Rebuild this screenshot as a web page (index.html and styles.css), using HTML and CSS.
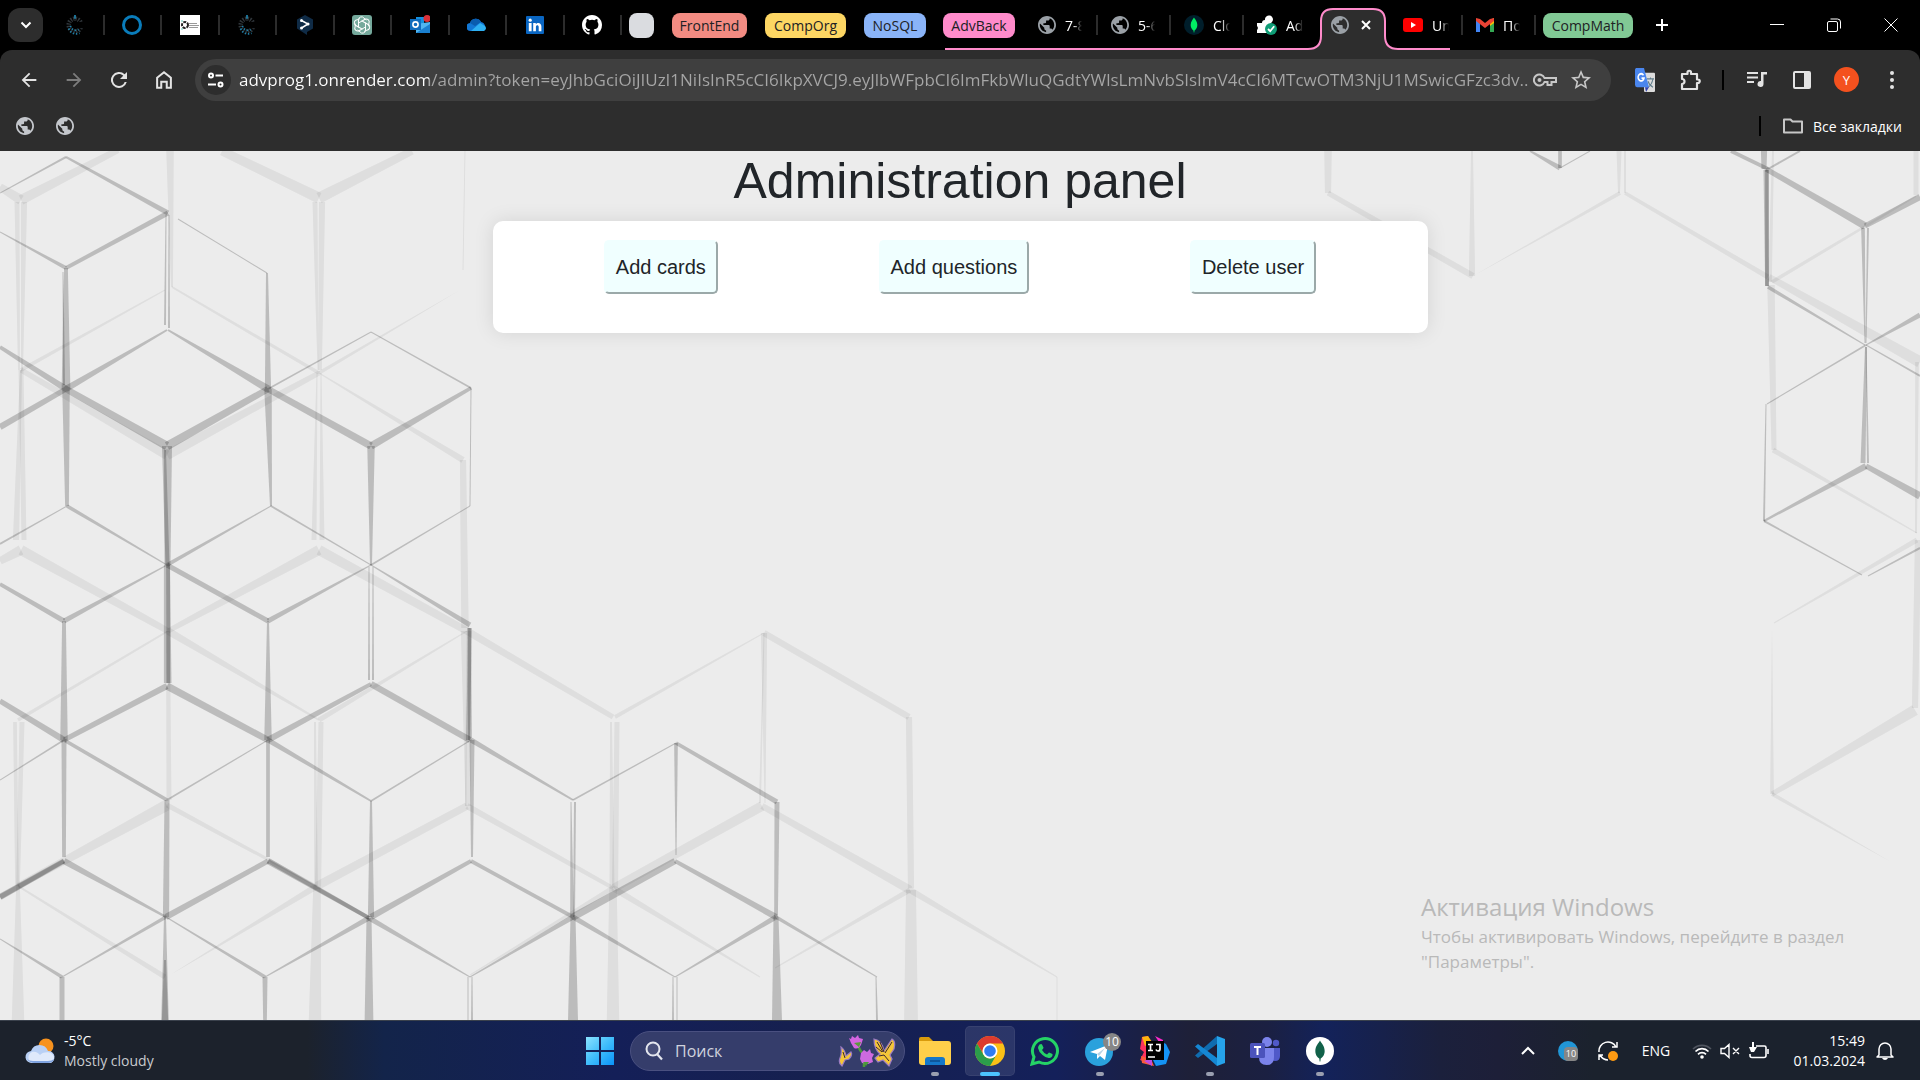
FILE: index.html
```
<!DOCTYPE html>
<html lang="ru">
<head>
<meta charset="utf-8">
<title>Administration panel</title>
<link rel="stylesheet" href="styles.css">
</head>
<body>
<svg class="sprite" aria-hidden="true">
  <symbol id="globe" viewBox="2 2 20 20"><path d="M12 2C6.48 2 2 6.48 2 12s4.480 10 10 10 10-4.480 10-10S17.520 2 12 2zm-1 17.930c-3.950-.49-7-3.850-7-7.930 0-.62.080-1.210.21-1.790L9 15v1c0 1.100.9 2 2 2v1.930zm6.900-2.540c-.26-.81-1-1.390-1.900-1.390h-1v-3c0-.55-.45-1-1-1H8v-2h2c.55 0 1-.45 1-1V7h2c1.100 0 2-.9 2-2v-.41c2.930 1.190 5 4.060 5 7.410 0 2.080-.8 3.970-2.100 5.390z"/></symbol>
  <symbol id="radial-c" viewBox="0 0 20 24"><g fill="none"><circle cx="10" cy="12" r="7" stroke="#30363b" stroke-width="5" stroke-dasharray="1.6 1.4" pathLength="48" /><path d="M3 16a8.500 8.500 0 0 0 12 5M5 13a6 6 0 0 0 9 4" stroke="#1c7fa8" stroke-width="2" stroke-dasharray="1.500 2"/><path d="M10 1v4" stroke="#2aa5d8" stroke-width="1.500"/><path d="M13 12h7" stroke="#000" stroke-width="7"/></g></symbol>
  <symbol id="mongo" viewBox="0 0 24 24"><path d="M12 3c1 2 4 4.500 4 9 0 3.500-2 5.500-3.400 6.500L12.300 21h-.6l-.3-2.500C10 17.500 8 15.500 8 12c0-4.500 3-7 4-9z"/></symbol>
</svg>

<header class="browser">
  <div class="tabstrip">
    <button class="tab-search" aria-label="Search tabs"><svg viewBox="0 0 12 12" width="12" height="12"><path d="M1.500 3.500 6 8l4.500-4.500" fill="none" stroke="#fff" stroke-width="2"/></svg></button>
    <nav class="pinned" aria-label="Pinned tabs">
      <a href="#"><svg width="18" height="22"><use href="#radial-c"/></svg></a>
      <a href="#"><svg width="20" height="20" viewBox="0 0 20 20"><circle cx="10" cy="10" r="8.500" fill="none" stroke="#0a7cba" stroke-width="3"/></svg></a>
      <a href="#"><svg width="20" height="20" viewBox="0 0 20 20"><path fill="#fff" d="M0 0h20v20H0z"/><circle cx="5" cy="10" r="3" fill="none" stroke="#222" stroke-width="2" stroke-dasharray="3 1"/><path d="M1 6h2M1 14h2" stroke="#6cb"/><path d="M9 8.500h8M9 10.500h10M9 12.500h9" stroke="#999"/></svg></a>
      <a href="#"><svg width="18" height="22"><use href="#radial-c"/></svg></a>
      <a href="#"><svg width="18" height="20" viewBox="0 0 18 20"><path d="M9 0l8 4.500v9L11 17v3l-3-2-7-4.500v-9z" fill="#0f2b46"/><path d="M5.500 5.500 12 9l-6.500 4" fill="none" stroke="#fff" stroke-width="1.500"/><circle cx="5.500" cy="5.500" r="1.500" fill="#fff"/><circle cx="12" cy="9" r="1.500" fill="#fff"/><circle cx="5.500" cy="13" r="1.500" fill="#fff"/></svg></a>
      <a href="#"><svg width="20" height="20" viewBox="0 0 20 20"><rect width="20" height="20" rx="3" fill="#75a99c"/><g fill="none" stroke="#fff"><path id="petal" d="M10 6 6.500 8V4.500A3 3 0 0 1 12 3.200L14.500 5"/><use href="#petal" transform="rotate(60 10 10)"/><use href="#petal" transform="rotate(120 10 10)"/><use href="#petal" transform="rotate(180 10 10)"/><use href="#petal" transform="rotate(240 10 10)"/><use href="#petal" transform="rotate(300 10 10)"/></g></svg></a>
      <a href="#"><svg width="20" height="20" viewBox="0 0 20 20"><path d="M6 2h8v8H6z" fill="#1490df"/><path d="M6 9l14-2v11H6z" fill="#50b5f0"/><path d="M6 18 20 9v9z" fill="#1a80d0"/><rect y="4" width="11" height="11" fill="#0f6cbd"/><circle cx="5.500" cy="9.500" r="2.600" fill="none" stroke="#fff" stroke-width="1.600"/><circle cx="17" cy="3.500" r="3.500" fill="#d93038"/></svg></a>
      <a href="#"><svg width="20" height="14" viewBox="0 0 20 14"><path d="M4 13a4 4 0 0 1-1-8 6 6 0 0 1 11-1 5 5 0 0 1 2 9z" fill="#1277d4"/><path d="M4 13l9-8 5 3a3 3 0 0 1-1 5z" fill="#2eb0f2"/><path d="M3 5a6 6 0 0 1 11-1l-6 4z" fill="#0a5cae"/></svg></a>
      <a href="#"><svg width="18" height="18" viewBox="0 0 18 18"><rect width="18" height="18" rx="1" fill="#0a66c2"/><g fill="#fff"><circle cx="4.200" cy="4.200" r="1.600"/><path d="M2.800 7h2.800v8.300H2.800zM7.200 7h2.600v1.200C11.500 6 15.400 6.500 15.400 10.500v4.800h-2.700v-4.300c0-2.500-2.800-2.300-2.800 0v4.300H7.200z"/></g></svg></a>
      <a href="#"><svg width="20" height="20" viewBox="0 0 16 16"><path fill="#fff" d="M8 0C3.580 0 0 3.580 0 8c0 3.540 2.290 6.530 5.470 7.590.4.070.55-.17.55-.38 0-.19-.01-.82-.01-1.490-2.010.37-2.530-.49-2.690-.94-.09-.23-.48-.94-.82-1.130-.28-.15-.68-.52-.01-.53.63-.01 1.080.58 1.230.82.72 1.210 1.870.87 2.330.66.07-.52.28-.87.51-1.070-1.780-.2-3.640-.89-3.640-3.950 0-.87.31-1.590.82-2.150-.08-.2-.36-1.020.08-2.120 0 0 .67-.21 2.200.82a7.600 7.600 0 0 1 4 0c1.530-1.040 2.200-.82 2.200-.82.44 1.100.16 1.920.08 2.120.51.56.82 1.270.82 2.150 0 3.070-1.870 3.750-3.650 3.950.29.25.54.73.54 1.480 0 1.070-.01 1.930-.01 2.200 0 .21.15.46.55.38A8 8 0 0 0 16 8c0-4.420-3.580-8-8-8z"/></svg></a>
    </nav>
    <div class="groups">
      <button class="chip chip-blank" aria-label="Group"></button>
      <button class="chip chip-red">FrontEnd</button>
      <button class="chip chip-yellow">CompOrg</button>
      <button class="chip chip-blue">NoSQL</button>
    </div>
    <div class="active-group">
      <svg class="group-line" width="508" height="50" viewBox="944 0 508 50"><path d="M1309 50Q1322 49 1322 36V21Q1322 9 1334 9h40Q1386 9 1386 21V36Q1386 49 1399 50z" fill="#2d2d2d"/><path d="M946 49h363Q1322 49 1322 36V21Q1322 9 1334 9h40Q1386 9 1386 21V36Q1386 49 1399 49h52" fill="none" stroke="#ff8bcb" stroke-width="2"/></svg>
      <button class="chip chip-pink">AdvBack</button>
      <nav class="tabs" aria-label="Tabs">
        <a href="#" class="sep"><svg class="globe" width="18" height="18"><use href="#globe"/></svg><span>7-8</span></a>
        <a href="#" class="sep"><svg class="globe" width="18" height="18"><use href="#globe"/></svg><span>5-6</span></a>
        <a href="#" class="sep"><svg width="20" height="20" viewBox="0 0 24 24"><circle cx="12" cy="12" r="12" fill="#001e2b"/><use href="#mongo" fill="#00ed64"/></svg><span>Clo</span></a>
        <a href="#"><svg width="20" height="20" viewBox="0 0 20 20"><path d="M0 8h5a3 3 0 0 1 3-3 4 4 0 1 1 7 2l-5 5v6H0v-3a3 3 0 0 0 0-4z" fill="#fff"/><circle cx="14" cy="14" r="6" fill="#0f9d76"/><path d="M11 14l2.200 2.200 4-5" fill="none" stroke="#fff" stroke-width="1.800"/></svg><span>Ad</span></a>
        <a href="#" class="active" aria-label="Administration panel"><svg class="globe" width="18" height="18"><use href="#globe"/></svg><svg width="10" height="10" viewBox="0 0 10 10"><path d="M1 1l8 8M9 1 1 9" stroke="#fff" stroke-width="2"/></svg></a>
        <a href="#" class="sep"><svg width="20" height="20" viewBox="0 0 20 20"><rect y="3" width="20" height="14" rx="3" fill="#f00"/><path d="M8 7l5 3-5 3z" fill="#fff"/></svg><span>Un</span></a>
        <a href="#" class="sep"><svg width="18" height="18" viewBox="0 0 18 18"><path d="M0 4h4v12H0z" fill="#4285f4"/><path d="M14 4h4v12h-4z" fill="#34a853"/><path d="M14 4l4-2v5l-4 3z" fill="#fbbc04"/><path d="M0 2l4 1 5 4 5-4 4-1v3l-9 7-9-7z" fill="#ea4335"/></svg><span>По</span></a>
      </nav>
    </div>
    <button class="chip chip-green">CompMath</button>
    <button class="new-tab" aria-label="New tab"><svg width="14" height="14" viewBox="0 0 14 14"><path d="M7 1v12M1 7h12" stroke="#fff" stroke-width="2"/></svg></button>
    <div class="window-controls">
      <button aria-label="Minimize"><svg width="14" height="14" viewBox="0 0 14 14"><path d="M0 6.500h14" stroke="#fff"/></svg></button>
      <button aria-label="Restore"><svg width="14" height="14" viewBox="0 0 14 14"><path d="M.5 5a1.500 1.500 0 0 1 1.500-1.500h7A1.500 1.500 0 0 1 10.500 5v7A1.500 1.500 0 0 1 9 13.500H2A1.500 1.500 0 0 1 .5 12zM3.500 1h7a3 3 0 0 1 3 3v6.500" fill="none" stroke="#fff"/></svg></button>
      <button aria-label="Close"><svg width="14" height="14" viewBox="0 0 14 14"><path d="M.5.500l13 13M13.500.500l-13 13" stroke="#fff"/></svg></button>
    </div>
  </div>

  <div class="toolbar">
    <div class="nav-buttons">
      <button aria-label="Back"><svg width="22" height="22" viewBox="0 0 24 24"><path fill="#e3e3e3" d="M20 11H7.830l5.590-5.590L12 4l-8 8 8 8 1.410-1.410L7.830 13H20z"/></svg></button>
      <button aria-label="Forward"><svg width="22" height="22" viewBox="0 0 24 24"><path fill="#7c7c7c" d="M12 4l-1.410 1.410L16.170 11H4v2h12.170l-5.580 5.590L12 20l8-8z"/></svg></button>
      <button aria-label="Reload"><svg width="24" height="24" viewBox="0 0 24 24"><path fill="#e3e3e3" d="M17.650 6.350A8 8 0 1 0 19.730 14h-2.080A6 6 0 1 1 12 6c1.660 0 3.140.69 4.220 1.780L13 11h7V4z"/></svg></button>
      <button aria-label="Home"><svg width="22" height="22" viewBox="0 0 24 24"><path d="M4.500 9.500 12 3.500l7.500 6V20.500H15V14H9v6.500H4.500z" fill="none" stroke="#e3e3e3" stroke-width="2.200"/></svg></button>
    </div>
    <div class="omnibox">
      <button class="site-info" aria-label="Site information"><svg width="18" height="18" viewBox="0 0 18 18"><g fill="none" stroke="#fff" stroke-width="2"><circle cx="4" cy="4.500" r="2"/><path d="M8.500 4.500H16M1 13.500h8"/><circle cx="13.500" cy="13.500" r="2"/></g></svg></button>
      <input class="url" type="text" aria-label="Address" value="advprog1.onrender.com/admin?token=eyJhbGciOiJIUzI1NiIsInR5cCI6IkpXVCJ9.eyJlbWFpbCI6ImFkbWluQGdtYWlsLmNvbSIsImV4cCI6MTcwOTM3NjU1MSwicGFzc3dv...">
      <button class="key" aria-label="Passwords"><svg width="24" height="14" viewBox="0 0 24 14"><g fill="none" stroke="#c7c7c7" stroke-width="2"><path d="M11.500 5A5.500 5.500 0 1 0 11.500 9h3v3h4V9H23V5z"/></g><circle cx="6.500" cy="7" r="2" fill="#c7c7c7"/></svg></button>
      <button aria-label="Bookmark this page"><svg width="24" height="24" viewBox="0 0 24 24"><path fill="#c7c7c7" d="M22 9.240l-7.190-.62L12 2 9.190 8.630 2 9.240l5.460 4.730L5.820 21 12 17.270 18.180 21l-1.630-7.030zM12 15.400l-3.760 2.270 1-4.280-3.320-2.880 4.380-.38L12 6.100l1.710 4.040 4.380.38-3.320 2.880 1 4.280z"/></svg></button>
    </div>
    <div class="extensions">
      <button aria-label="Translate"><svg width="20" height="24" viewBox="0 0 20 20" preserveAspectRatio="none"><rect x="9" y="4" width="11" height="16" rx="1" fill="#dcdcdc"/><path d="M12 9h7M15.500 8v1M18 9c-1 4-3 6-5 7M13 11c1 3 3 4 5 5" stroke="#607d8b" fill="none"/><path d="M1 0h8l5 16H2a2 2 0 0 1-2-2V1z" fill="#4a86ee"/><path d="M10 16h4l-3 4z" fill="#3344b0"/><path d="M8.500 6A3 3 0 1 0 9 8.500H6.500" stroke="#fff" stroke-width="1.500" fill="none"/></svg></button>
      <button aria-label="Extensions"><svg width="24" height="24" viewBox="0 0 24 24"><path d="M4 6h5.500V4.500a1.700 1.700 0 0 1 3.500 0V6h6v5.500h1a1.700 1.700 0 0 1 0 3.500h-1V21H4v-5a2.500 2.500 0 0 0 0-5z" fill="none" stroke="#e3e3e3" stroke-width="2.200" stroke-linejoin="round"/></svg></button>
      <span class="bar-divider"></span>
      <button aria-label="Media"><svg width="20" height="18" viewBox="0 0 20 18"><path d="M0 2h11M0 6.500h11M0 11h7" stroke="#e3e3e3" stroke-width="2"/><path d="M14 1h6v2.500h-3.500V13a3 3 0 1 1-2.500-3z" fill="#e3e3e3"/></svg></button>
      <button aria-label="Side panel"><svg width="18" height="18" viewBox="0 0 18 18"><rect x="1" y="1" width="16" height="16" rx="1" fill="none" stroke="#e3e3e3" stroke-width="2"/><path d="M11 1h6v16h-6z" fill="#e3e3e3"/></svg></button>
      <button class="avatar">Y</button>
      <button aria-label="Menu"><svg width="6" height="20" viewBox="0 0 6 20"><g fill="#e3e3e3"><circle cx="3" cy="3" r="2"/><circle cx="3" cy="10" r="2"/><circle cx="3" cy="17" r="2"/></g></svg></button>
    </div>
  </div>

  <div class="bookmarks">
    <a href="#" aria-label="Bookmark"><svg width="18" height="18"><use href="#globe"/></svg></a>
    <a href="#" aria-label="Bookmark"><svg width="18" height="18"><use href="#globe"/></svg></a>
    <span class="bar-divider"></span>
    <button class="all-bookmarks"><svg width="20" height="16" viewBox="0 0 20 16"><path d="M1 1.500h6.500l2 2H19v11H1z" fill="none" stroke="#c7c7c7" stroke-width="2" stroke-linejoin="round"/></svg>Все закладки</button>
  </div>
</header>

<main class="page">
  <svg class="pattern" viewBox="0 151 1920 869" preserveAspectRatio="xMidYMin slice" aria-hidden="true"><g id="light"></g><g id="dark"></g></svg>
  <h1>Administration panel</h1>
  <section class="panel">
    <button>Add cards</button>
    <button>Add questions</button>
    <button>Delete user</button>
  </section>
  <aside class="activation">
    <h2>Активация Windows</h2>
    <p>Чтобы активировать Windows, перейдите в раздел<br>"Параметры".</p>
  </aside>
</main>

<footer class="taskbar">
  <button class="weather">
    <svg width="30" height="26" viewBox="0 0 30 26"><circle cx="21" cy="8" r="7.500" fill="#f7921e"/><path d="M7 25a6 6 0 0 1-1-12 9 9 0 0 1 17 0 6 6 0 0 1 1 12z" fill="#b9d0f5"/><path d="M7 25a6 6 0 0 1 0-11c4-1 6 1 8 3 2-3 12-5 14 2 0 4-2 6-5 6z" fill="#dfe9fb"/><path d="M2 21q3 4 7 4h14q5 0 6-4-2 2-6 2H8q-4 0-6-2z" fill="#7fa3e0"/></svg>
    <span><b>-5°C</b><br>Mostly cloudy</span>
  </button>
  <nav class="apps" aria-label="Taskbar">
    <button aria-label="Start"><svg width="30" height="30" viewBox="0 0 30 30"><defs><linearGradient id="win" x2="1" y2="1"><stop stop-color="#8be3ff"/><stop offset=".5" stop-color="#40bdfb"/><stop offset="1" stop-color="#0a93fb"/></linearGradient></defs><path d="M1 1h13v13H1zM16 1h13v13H16zM1 16h13v13H1zM16 16h13v13H16z" fill="url(#win)"/></svg></button>
    <label class="search"><svg width="20" height="20" viewBox="0 0 20 20"><circle cx="10" cy="8" r="6.500" fill="rgba(255,255,255,.1)" stroke="#e4e6ee" stroke-width="2"/><path d="M14 13l5 5.500" stroke="#e4e6ee" stroke-width="2.200"/></svg><input type="text" placeholder="Поиск" aria-label="Поиск"><svg width="58" height="34" viewBox="0 0 58 34"><path d="M20 12q2 5 6 9v12" stroke="#4a9a3a" stroke-width="2.500" fill="none"/><path d="M11 4l2 1 1-3 3 2 3-3 1 3 4 1-2 6q-3 5-7 3l-3-5z" fill="#d466e0"/><path d="M16 9l7-1-2 5z" fill="#5a9a3a"/><path d="M23 19l3-3 3 2 3-3 1 4 3 1-2 4 1 4-5 2-6-1-2-4z" fill="#cd6adf"/><path d="M25 28h6l-3 4z" fill="#4a9a3a"/><g fill="#f5c638" stroke="#9b7cc4" stroke-width="1.200"><path d="M3 13q4 3 5 9l5-4q2 3-2 7l-4 1-3 6q-4-3-2-8 2-4 1-11z"/><path d="M36 5q8 1 10 12l8-12q4 2 2 10l-4 6 2 4-3 7-6-6-5 2-3-4 5-4q-6-5-6-15z"/></g><path d="M39 8l6 10M42 8l4 10M54 8l-7 11M41 22l5-1 5 6M5 18l2 6M38 13l6 5" stroke="#3a2730" fill="none"/></svg></label>
    <button class="run" aria-label="Explorer"><svg width="32" height="28" viewBox="0 0 32 28"><path d="M0 2q0-2 2-2h8l4 4H0z" fill="#d99b0c"/><path d="M0 4h29q3 0 3 3v18q0 3-3 3H3q-3 0-3-3z" fill="#ffcf4a"/><path d="M6 28v-5q0-3 3-3h14q3 0 3 3v5z" fill="#1577c9"/><path d="M11 24h10" stroke="#0c4d8c" stroke-width="1.500"/></svg></button>
    <button class="run focused" aria-label="Chrome"><svg width="30" height="30" viewBox="0 0 30 30"><circle cx="15" cy="15" r="15" fill="#fbc116"/><path d="M2 7.500A15 15 0 0 1 28 7.500H15a7.500 7.500 0 0 0-6.500 11z" fill="#dd3b2f"/><path d="M2 7.500 8.500 18.800A7.500 7.500 0 0 0 21.500 18.800L15 30A15 15 0 0 1 2 7.500z" fill="#2b9d4b"/><circle cx="15" cy="15" r="7.500" fill="#fff"/><circle cx="15" cy="15" r="5.800" fill="#2f7cf0"/></svg></button>
    <button aria-label="WhatsApp"><svg width="30" height="30" viewBox="0 0 30 30"><path d="M2 28l2-7a12.500 12.500 0 1 1 5 5z" fill="none" stroke="#25d366" stroke-width="3"/><path d="M9.500 8.500q2-1 2.500 0l1.500 3q0 1-1.500 2.500 2 3.500 5 4.500l2-2 3.500 1.500q.5 3-3 4-3 .5-7-3t-4.500-7q0-2 1.500-3.500z" fill="#25d366"/></svg></button>
    <button class="run" aria-label="Telegram"><svg width="30" height="30" viewBox="0 0 30 30"><circle cx="14" cy="16" r="14" fill="#2aa1dc"/><path d="M5 16l18-7-3 15-5-4-3 3v-5z" fill="#fff"/><path d="M12 18l8-6-6 8z" fill="#b5d3e6"/></svg><span class="badge">10</span></button>
    <button aria-label="IntelliJ IDEA"><svg width="30" height="30" viewBox="0 0 30 30"><path d="M2 1l6-1 5 10L6 26 0 24l4-8-4-3z" fill="#fe315d"/><path d="M2 1l6-1 4 6-7 4z" fill="#fdb60d"/><path d="M1 20l10 3 3 7L2 27z" fill="#fb5b3a"/><path d="M12 30l-8-5 8-3z" fill="#c04be0"/><path d="M15 0l8 4v8z" fill="#fe2acb"/><path d="M22 6l4 2 4 8-4 12-10 2-3-6z" fill="#1493f5"/><path d="M6 5h18v19H6z" fill="#000"/><g fill="none" stroke="#fff" stroke-width="1.700"><path d="M8 8.500h5M10.500 8.500v6M8 14.500h5M16 8.500h4V13q0 2-2 2-1.500 0-2-1.500M8 21h7"/></g></svg></button>
    <button class="run" aria-label="Visual Studio Code"><svg width="30" height="30" viewBox="0 0 30 30"><path d="M22 0l8 3v24l-8 3z" fill="#26a3ea"/><path d="M22 8 3 22 0 19.500 22 0z" fill="#0f6cb0"/><path d="M22 22 3 8 0 10.500 22 30z" fill="#1587d4"/></svg></button>
    <button aria-label="Teams"><svg width="30" height="28" viewBox="0 0 30 28"><circle cx="17" cy="5" r="5" fill="#7b83eb"/><circle cx="26" cy="6" r="3.200" fill="#5059c9"/><path d="M22 11h8v8q0 5-5 5-3 0-4-2z" fill="#5059c9"/><path d="M9 11h15v9q0 8-7.500 8T9 20z" fill="#7b83eb"/><rect y="6" width="15" height="15" rx="1.500" fill="#4b53bc"/><path d="M4 10h7M7.500 10v8" stroke="#fff" stroke-width="2"/></svg></button>
    <button class="run" aria-label="MongoDB Compass"><svg width="28" height="28" viewBox="0 0 24 24"><circle cx="12" cy="12" r="12" fill="#fff"/><use href="#mongo" fill="#116149"/></svg></button>
  </nav>
  <div class="tray">
    <button aria-label="Hidden icons"><svg width="14" height="10" viewBox="0 0 14 10"><path d="M1 8l6-6 6 6" fill="none" stroke="#fff" stroke-width="2"/></svg></button>
    <button aria-label="Telegram"><svg width="20" height="20" viewBox="0 0 20 20"><circle cx="10" cy="10" r="10" fill="#2196d6"/><rect x="6" y="6" width="14" height="14" rx="4" fill="#868686"/></svg><span class="count">10</span></button>
    <button aria-label="Sync"><svg width="20" height="20" viewBox="0 0 20 20"><path d="M1 11A9 9 0 0 1 18 6M19 1v5h-5M10 19q-5 0-8-5M1 19v-5h4" fill="none" stroke="#fff" stroke-width="1.500"/><circle cx="15" cy="15" r="5" fill="#ff9b12"/></svg></button>
    <button class="lang">ENG</button>
    <button class="status" aria-label="Network, volume, battery">
      <svg width="20" height="16" viewBox="0 0 20 16"><g fill="none" stroke="#fff" stroke-width="1.700"><path d="M1 6a13 13 0 0 1 18 0" stroke="#50555f"/><path d="M3.500 8.500a9 9 0 0 1 13 0M6 11.300a5.500 5.500 0 0 1 8 0"/></g><circle cx="10" cy="14" r="1.800" fill="#fff"/></svg>
      <svg width="20" height="16" viewBox="0 0 20 16"><path d="M1 5.500h3.500L9 1.500v13L4.500 10.500H1zM13 5l6 6M19 5l-6 6" fill="none" stroke="#fff" stroke-width="1.400"/></svg>
      <svg width="22" height="18" viewBox="0 0 22 18"><path d="M8 4h8.500q1.500 0 1.500 1.500v8q0 2-2 2H4q-2 0-2-2V12M20 7v5" fill="none" stroke="#fff" stroke-width="1.600"/><path d="M4 0v5H1l2 5h3l3-5H6V0z" fill="#fff"/></svg>
    </button>
    <button class="clock">15:49<br>01.03.2024</button>
    <button aria-label="Notifications"><svg width="18" height="20" viewBox="0 0 18 20"><path d="M3 14V8a6 6 0 0 1 12 0v6l2 2H1z" fill="none" stroke="#fff" stroke-width="1.500" stroke-linejoin="round"/><path d="M6 17h6q-1 2-3 2t-3-2z" fill="#fff"/></svg></button>
  </div>
</footer>
<script src="pattern.js"></script>
</body>
</html>
```
FILE: styles.css
```
* { box-sizing: border-box; }
body {
  margin: 0;
  min-height: 100vh;
  display: flex;
  flex-direction: column;
  font-family: "Open Sans", "Noto Sans", sans-serif;
  font-size: 14px;
  color: #fff;
}
button { border: 0; padding: 0; background: none; color: inherit; font: inherit; display: flex; align-items: center; justify-content: center; }
a { color: inherit; text-decoration: none; }
svg { display: block; flex: none; }
.sprite { position: absolute; width: 0; height: 0; }

/* browser frame */
.browser { background: #000; }
.tabstrip { display: flex; align-items: center; height: 50px; padding-left: 8px; }
.tab-search { width: 35px; height: 34px; border-radius: 12px; background: #2d2d2d; }
.pinned { display: grid; grid-template-columns: repeat(10, 1fr); width: 575px; margin-left: 4px; }
.pinned a, .tabs a { display: flex; align-items: center; height: 20px; }
.pinned a { justify-content: center; border-right: 2px solid #2c2c2c; }
.groups { display: flex; gap: 18px; margin: 0 17px 0 7px; }
.chip { height: 25px; border-radius: 8px; color: #202124; white-space: nowrap; }
.chip-blank { width: 25px; background: #dadce0; }
.chip-red { width: 75px; background: #f28b82; }
.chip-yellow { width: 81px; background: #fdd663; }
.chip-blue { width: 62px; background: #8ab4f8; }
.chip-pink { width: 72px; background: #ff8bcb; }
.chip-green { width: 90px; margin-left: 7px; background: #81c995; }
.active-group { position: relative; display: flex; align-items: center; height: 50px; gap: 10px; }
.group-line { position: absolute; left: 0; bottom: 0; }
.chip-pink, .tabs { position: relative; }
.tabs { display: flex; }
.tabs a { width: 73px; padding-left: 13px; gap: 9px; border-right: 2px solid transparent; }
.tabs .sep { border-color: #2c2c2c; }
.tabs span { width: 17px; overflow: hidden; white-space: nowrap; mask-image: linear-gradient(90deg, #000 50%, transparent); }
.tabs .active { gap: 12px; padding-left: 14px; }
.globe { fill: #9aa0a6; }
.new-tab { width: 58px; height: 34px; }
.window-controls { display: flex; margin-left: auto; padding-right: 1px; }
.window-controls button { width: 57px; height: 34px; }

.toolbar { display: flex; align-items: center; height: 59px; padding: 0 6px; background: #2d2d2d; border-radius: 12px 12px 0 0; }
.nav-buttons { display: flex; margin-right: 9px; }
.nav-buttons button { width: 45px; height: 42px; }
.omnibox { flex: 1; display: flex; align-items: center; height: 42px; padding: 0 10px 0 6px; border-radius: 21px; background: #3f3f3f; }
.omnibox button { width: 40px; height: 36px; }
.omnibox .key { width: 32px; }
.omnibox .site-info { width: 30px; height: 30px; border-radius: 50%; background: #2d2d2d; }
.url {
  flex: 1; min-width: 0; height: 36px; border: 0; padding: 0; margin-left: 8px; outline: 0;
  font: 17px "Open Sans", "Noto Sans", sans-serif;
  color: transparent;
  background: linear-gradient(90deg, #fff 190px, #a6a6a6 190px);
  background-clip: text;
}
.extensions { display: flex; align-items: center; margin-left: 11px; }
.extensions button { width: 45px; height: 36px; }
.bar-divider { width: 2px; height: 20px; margin: 0 10px; background: #000; }
.extensions .avatar { width: 25px; height: 25px; margin: 0 10px; border-radius: 50%; background: #f4511e; font-size: 13px; }

.bookmarks { display: flex; align-items: center; height: 42px; padding: 0 18px 8px 16px; gap: 22px; background: #2d2d2d; }
.bookmarks a { fill: #c4c7cc; }
.bookmarks .bar-divider { margin: 0 0 0 auto; }
.all-bookmarks { gap: 10px; white-space: nowrap; }

/* page */
.page { position: relative; flex: 1; background: #ececec; color: #212529; font-family: "Liberation Sans", Arial, sans-serif; overflow: hidden; }
.pattern { position: absolute; inset: 0; width: 100%; height: 100%; }
.page h1 { position: relative; margin: 0 0 10px; font-size: 50px; line-height: 60px; font-weight: 500; text-align: center; }
.panel {
  position: relative; display: flex; align-items: flex-start; justify-content: space-around;
  max-width: 935px; min-height: 112px; margin: 0 auto; padding: 19px 31px 39px;
  border-radius: 10px; background: #fff; box-shadow: 0 0 20px rgba(0, 0, 0, .1);
}
.panel button {
  height: 54px; padding: 0 10px; font-size: 20px; border: 2px solid; border-color: #f0ffff #9ba9a9 #9ba9a9 #f0ffff;
  border-radius: 5px; background: #f0ffff;
}
.activation { position: absolute; right: 79px; bottom: 46px; width: 420px; color: #b9b9b9; font: 17px/25px "Open Sans", "Noto Sans", sans-serif; white-space: nowrap; }
.activation h2 { margin: 0; font-size: 24px; line-height: 34px; font-weight: 400; }
.activation p { margin: 0; }

/* taskbar */
.taskbar {
  display: grid; grid-template-columns: 1fr auto 1fr; align-items: center; height: 60px;
  border-top: 1px solid #3a414c;
  background: linear-gradient(90deg, #1c222c 16%, #13244a 20%, #141f58 32%, #16204f 42%, #14205a 55%, #1e2038 62%, #1b2042 66%, #13225a 69%, #1b203c 75%, #1d1f38 78%, #1b222d 83%);
}
.weather { justify-content: flex-start; gap: 9px; padding-left: 25px; text-align: left; line-height: 20px; color: #c9cbcf; }
.weather b { color: #fff; font-weight: 400; }
.apps { display: flex; align-items: center; gap: 5px; }
.apps button { position: relative; width: 50px; height: 50px; border-radius: 5px; }
.apps .focused { background: rgba(255, 255, 255, .1); box-shadow: inset 0 0 0 1px rgba(255, 255, 255, .06); }
.run::after { content: ""; position: absolute; bottom: 0; left: 21px; width: 8px; height: 4px; border-radius: 2px; background: #9a9fb0; }
.focused::after { left: 15px; width: 20px; background: #4cc2ff; }
.badge { position: absolute; right: 4px; top: 7px; width: 18px; height: 18px; border-radius: 50%; background: #868686; font-size: 12px; line-height: 18px; }
.search { display: flex; align-items: center; width: 275px; height: 40px; padding: 0 8px 0 12px; gap: 12px; border: 1px solid #4a5080; border-radius: 20px; background: #353d6b; }
.search input { flex: 1; min-width: 0; border: 0; padding: 0; background: none; color: #fff; outline: 0; font: 16px "Open Sans", "Noto Sans", sans-serif; }
.search input::placeholder { color: #d0d3de; opacity: 1; }
.tray { display: flex; align-items: center; justify-content: flex-end; padding-right: 15px; }
.tray button { position: relative; width: 40px; height: 50px; }
.tray .count { position: absolute; right: 10px; bottom: 15px; width: 14px; font-size: 9px; line-height: 14px; }
.tray .lang { width: 56px; }
.tray .status { width: 94px; gap: 8px; }
.tray .clock { width: 87px; justify-content: flex-end; text-align: right; line-height: 20px; }
```
FILE: pattern.js
```
// Each row is one tapered edge: x1, y1, width1, x2, y2, width2.
const dark = [
[0,193,1,66,157,2],[66,157,2,168,213,4],[168,213,4,66,268,3],[66,268,3,0,232,1],[66,268,3,66,389,7],[63,272,1,64,385,2],
[166,215,1,165,325,2],[169,215,1,169,328,2],[167,330,2,66,389,5],[168,330,2,268,389,6],[178,219,1,267,273,1],[267,273,2,268,389,5],
[66,389,5,167,446,7],[167,446,7,268,389,5],[66,389,6,67,506,3],[0,347,3,66,389,5],[0,427,5,66,389,4],[67,506,3,167,565,1],
[167,446,8,168,565,4],[165,450,2,167,565,4],[268,389,6,271,506,2],[268,389,5,371,446,6],[371,446,6,471,388,3],[471,388,2,371,332,1],[371,332,1,268,389,2],
[471,388,1,470,506,1],[470,506,1,371,565,2],[371,446,6,371,565,2],[271,506,2,371,565,1],[271,506,1,167,565,3],[67,506,1,0,544,2],
[167,565,1,64,621,4],[64,621,4,0,584,3],[64,621,3,64,740,6],[167,565,5,167,683,5],[168,565,3,169,683,4],[167,565,4,268,621,4],[268,621,4,371,565,1],[268,621,2,268,740,6],
[369,567,1,369,680,2],[373,567,1,373,680,2],[371,565,1,470,625,4],[469,628,3,470,740,3],[470,628,3,468,740,3],[371,684,5,470,740,5],[371,684,3,268,740,5],
[167,686,6,268,740,5],[167,686,5,64,740,4],[64,740,5,0,701,4],[64,740,2,0,780,1],[64,740,4,64,857,3],[64,740,3,167,800,3],[167,800,2,268,740,1],[268,740,3,268,857,3],[268,740,4,371,801,2],
[371,801,2,471,740,1],[371,801,2,371,917,5],[64,861,4,0,897,5],[64,861,3,0,897,4],[64,861,5,166,917,2],[167,800,4,166,917,5],[268,861,4,166,917,5],[268,861,5,369,918,3],[268,861,3,369,918,3],
[471,861,3,371,917,5],[472,740,4,472,857,2],[471,740,4,573,800,2],[166,917,3,62,977,1],[0,939,1,62,977,3],[62,977,4,62,1020,4],[166,917,1,265,977,3],[265,977,4,265,1020,3],[165,917,2,165,1020,6],[165,960,2,165,1020,5],
[369,918,4,265,977,1],[369,918,4,470,977,1],[369,918,4,369,1020,7],[468,977,1,468,1020,1],[472,977,1,472,1020,2],
[471,861,3,573,917,3],[571,802,1,572,917,3],[575,802,2,574,917,2],[573,800,2,676,743,1],[676,743,3,777,802,4],[676,743,3,676,855,1],[777,802,4,776,917,3],[675,861,5,573,917,6],[675,861,3,776,917,5],
[573,917,4,470,977,1],[573,917,4,573,1020,8],[573,917,4,675,977,1],[776,917,4,675,977,1],[776,917,4,777,1020,8],[776,917,3,877,977,1],[876,977,1,877,1020,2],[673,977,1,673,1020,2],[677,977,1,677,1020,1],
[1530,151,2,1560,168,4],[1560,151,3,1560,168,3],[1560,168,1,1590,151,1],[1731,151,3,1768,169,3],[1764,151,5,1764,169,4],[1768,169,2,1800,151,2],
[1766,169,4,1865,226,6],[1865,226,4,1920,197,5],[1766,170,4,1767,286,3],[1767,170,3,1767,286,3],[1768,287,3,1865,345,1],[1863,228,3,1865,343,1],[1868,228,2,1866,343,1],
[1866,345,1,1920,315,4],[1866,345,1,1920,376,2],[1866,345,2,1767,404,1],[1766,404,1,1764,521,2],[1866,347,2,1863,463,4],[1866,347,1,1868,463,2],[1866,466,5,1764,521,2],[1866,466,4,1920,496,6],[1764,521,2,1862,575,1],[1868,576,1,1920,548,2]
];
const light = [
[0,187,6,21,200,8],[21,200,8,118,150,5],[17,202,4,19,370,2],[24,202,5,22,370,2],[170,151,6,172,287,2],[222,151,7,319,198,9],[319,198,9,412,151,6],[315,202,4,318,370,1],[322,202,5,320,370,3],[465,150,1,463,270,1],
[172,287,2,319,373,3],[319,373,3,460,290,0],[21,370,3,165,290,1],[21,370,4,167,455,8],[167,455,8,319,373,4],[319,373,1,463,460,5],[463,460,5,465,628,6],[317,373,1,314,540,4],[321,373,1,322,540,4],
[21,370,2,16,540,5],[21,370,4,24,540,4],[21,550,8,0,561,6],[21,550,8,168,631,5],[319,550,8,168,631,4],[319,550,8,467,631,6],[168,631,2,18,720,3],[168,631,6,319,720,2],[168,631,3,169,800,4],
[467,631,1,319,720,4],[467,631,6,613,717,4],[15,722,3,17,886,3],[22,722,4,18,886,3],[315,722,2,316,886,3],[321,722,4,318,886,5],[167,805,9,18,886,5],[167,805,4,317,886,2],[467,806,6,317,886,7],
[464,631,5,466,806,1],[469,631,4,468,806,5],[467,806,5,613,888,3],[18,886,2,165,977,4],[18,886,3,18,1020,10],[317,886,5,170,975,0],[317,886,6,315,1020,10],
[615,717,3,764,633,1],[611,722,2,612,888,4],[617,722,4,615,888,5],[764,633,5,909,717,5],[764,633,5,765,803,1],[764,633,1,760,803,2],[762,806,8,614,888,7],[762,806,5,910,890,7],[909,717,5,911,888,5],
[910,890,4,775,968,1],[910,890,5,1057,977,1],[911,890,8,911,1020,11],[1057,977,1,1057,1020,1],[613,888,5,760,977,1],[613,888,6,613,1020,10],[613,888,4,470,975,1],
[1328,151,6,1328,193,5],[1328,193,4,1473,276,5],[1472,151,2,1472,276,5],[1473,276,0,1620,193,3],[1619,151,4,1619,193,2],[1625,151,2,1625,193,2],[1625,193,3,1768,277,4],
[1773,151,2,1770,282,3],[1769,277,5,1920,362,9],[1772,282,3,1916,196,2],[1916,151,4,1916,195,4],[1771,285,6,1774,450,4],[1773,450,4,1917,533,1],[1917,362,3,1916,533,2],
[1917,540,4,1774,623,1],[1918,540,5,1915,708,5],[1915,710,9,1772,794,4],[1772,623,0,1772,794,3],[1772,794,3,1891,862,0]
];

// Thick strokes spread a little further than thin ones.
const spread = w => (w > 2 ? w * 1.25 : w);

function draw(id, edges) {
  const group = document.getElementById(id);
  for (const [x1, y1, start, x2, y2, end] of edges) {
    const w1 = spread(start), w2 = spread(end);
    const length = Math.hypot(x2 - x1, y2 - y1);
    const nx = -(y2 - y1) / length / 2;
    const ny = (x2 - x1) / length / 2;
    const polygon = document.createElementNS("http://www.w3.org/2000/svg", "polygon");
    polygon.setAttribute("points", [
      [x1 + nx * w1, y1 + ny * w1], [x2 + nx * w2, y2 + ny * w2],
      [x2 - nx * w2, y2 - ny * w2], [x1 - nx * w1, y1 - ny * w1]
    ].join(" "));
    polygon.setAttribute("fill-opacity", id === "dark" ? 0.2 : 0.06);
    group.append(polygon);
  }
}
draw("light", light);
draw("dark", dark);
```
